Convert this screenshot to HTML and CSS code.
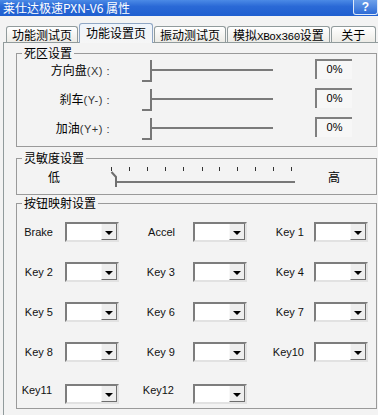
FILE: index.html
```html
<!DOCTYPE html>
<html lang="zh-CN">
<head>
    <meta charset="UTF-8">
    <title>莱仕达极速PXN-V6 属性</title>
    <link rel="stylesheet" href="styles.css">
</head>
<body>

    <div class="titlebar">
        <span class="title">莱仕达极速PXN-V6 属性</span>
        <span class="help">?</span>
    </div>

    <div class="tabs">
        <div class="tab">功能测试页</div>
        <div class="tab active">功能设置页</div>
        <div class="tab">振动测试页</div>
        <div class="tab">模拟<span class="mono">XBox360</span>设置</div>
        <div class="tab">关于</div>
    </div>

    <div class="panel">
        <!-- 死区设置 -->
        <fieldset class="group dead">
            <legend>死区设置</legend>
            <div class="dz-row">
                <div class="dz-label">方向盘<span class="axis">(X) :</span></div>
                <div class="slider"><span class="thumb"></span><span class="track"></span></div>
                <div class="value">0%</div>
            </div>
            <div class="dz-row">
                <div class="dz-label">刹车<span class="axis">(Y-) :</span></div>
                <div class="slider"><span class="thumb"></span><span class="track"></span></div>
                <div class="value">0%</div>
            </div>
            <div class="dz-row">
                <div class="dz-label">加油<span class="axis">(Y+) :</span></div>
                <div class="slider"><span class="thumb"></span><span class="track"></span></div>
                <div class="value">0%</div>
            </div>
        </fieldset>

        <!-- 灵敏度设置 -->
        <fieldset class="group sens">
            <legend>灵敏度设置</legend>
            <div class="sens-row">
                <span class="low">低</span>
                <svg class="ticks" width="190" height="24" viewBox="0 0 190 24">
                    <g stroke="#333" stroke-width="1">
                        <line x1="3.5" y1="2" x2="3.5" y2="6"/>
                        <line x1="21.5" y1="2" x2="21.5" y2="6"/>
                        <line x1="39.5" y1="2" x2="39.5" y2="6"/>
                        <line x1="57.5" y1="2" x2="57.5" y2="6"/>
                        <line x1="75.5" y1="2" x2="75.5" y2="6"/>
                        <line x1="94.5" y1="2" x2="94.5" y2="6"/>
                        <line x1="111.5" y1="2" x2="111.5" y2="6"/>
                        <line x1="129.5" y1="2" x2="129.5" y2="6"/>
                        <line x1="147.5" y1="2" x2="147.5" y2="6"/>
                        <line x1="165.5" y1="2" x2="165.5" y2="6"/>
                        <line x1="183.5" y1="2" x2="183.5" y2="6"/>
                    </g>
                    <line x1="8" y1="17" x2="187" y2="17" stroke="#777" stroke-width="2"/>
                    <path d="M3.5 7 L8 12 L8 22" fill="none" stroke="#6f6f6f" stroke-width="2"/>
                </svg>
                <span class="high">高</span>
            </div>
        </fieldset>

        <!-- 按钮映射设置 -->
        <fieldset class="group keys">
            <legend>按钮映射设置</legend>
            <div class="key-grid">
                <div class="key c1">Brake</div><div class="combo"><span class="drop"></span></div>
                <div class="key c2">Accel</div><div class="combo"><span class="drop"></span></div>
                <div class="key c3">Key 1</div><div class="combo"><span class="drop"></span></div>

                <div class="key c1">Key 2</div><div class="combo"><span class="drop"></span></div>
                <div class="key c2">Key 3</div><div class="combo"><span class="drop"></span></div>
                <div class="key c3">Key 4</div><div class="combo"><span class="drop"></span></div>

                <div class="key c1">Key 5</div><div class="combo"><span class="drop"></span></div>
                <div class="key c2">Key 6</div><div class="combo"><span class="drop"></span></div>
                <div class="key c3">Key 7</div><div class="combo"><span class="drop"></span></div>

                <div class="key c1">Key 8</div><div class="combo"><span class="drop"></span></div>
                <div class="key c2">Key 9</div><div class="combo"><span class="drop"></span></div>
                <div class="key c3">Key10</div><div class="combo"><span class="drop"></span></div>

                <div class="key c1 last">Key11</div><div class="combo last"><span class="drop"></span></div>
                <div class="key c2 last">Key12</div><div class="combo last"><span class="drop"></span></div>
            </div>
        </fieldset>
    </div>

</body>
</html>
```

FILE: styles.css
```css
body {
    margin: 0;
    width: 378px;
    height: 415px;
    overflow: hidden;
    background-color: #f3f3f3;
    font-family: "Noto Sans CJK SC", "Liberation Sans", sans-serif;
    font-size: 12px;
    color: #000;
}
.titlebar {
    height: 16px;
    display: flex;
    align-items: center;
    justify-content: space-between;
    background: linear-gradient(to bottom, #4b8ae6 0%, #2a69d6 40%, #1f5fd0 100%);
}
.title {
    margin-left: 3px;
    color: #fff;
    font-size: 12px;
    line-height: 14px;
}
.help {
    width: 23px;
    height: 14px;
    margin-top: -2px;
    border: 1px solid #dfe9f8;
    border-top: none;
    border-radius: 0 0 3px 3px;
    background: linear-gradient(to bottom, #6da0ea, #2e6bd6);
    color: #fff;
    font-family: "Liberation Sans", sans-serif;
    font-weight: bold;
    font-size: 12px;
    line-height: 14px;
    text-align: center;
}
.tabs {
    height: 26px;
    display: flex;
    align-items: flex-end;
    gap: 1px;
    padding-left: 6px;
}
.tab {
    box-sizing: border-box;
    height: 16px;
    min-width: 45px;
    padding: 0 5px;
    border: 1px solid #919b9c;
    border-bottom: none;
    border-radius: 3px 3px 0 0;
    background: linear-gradient(to bottom, #ffffff, #ecebe6);
    text-align: center;
    line-height: 15px;
    white-space: nowrap;
}
.tab.active {
    height: 20px;
    padding: 0 6px;
    margin-bottom: -1px;
    background: linear-gradient(to bottom, #eef4fb, #f6f6f6);
    border-color: #8fa6c4;
    line-height: 17px;
    position: relative;
}
.mono {
    font-family: "Liberation Mono", monospace;
    font-size: 11px;
    letter-spacing: -0.5px;
}
.panel {
    margin-left: 3px;
    border-left: 1px solid #919b9c;
    border-top: 1px solid #919b9c;
    padding: 0 1px 0 12px;
    height: 380px;
}
.group {
    margin: 0;
    padding: 0;
    border: 1px solid #9a9a9a;
    min-width: 0;
}
.group legend {
    margin-left: 5px;
    padding: 0 2px;
    line-height: 14px;
    font-size: 12px;
}
.dead {
    margin-top: 3px;
    padding-bottom: 6px;
}
.dz-row {
    display: flex;
    align-items: center;
    height: 22px;
    margin-bottom: 7px;
}
.dz-row:last-child {
    margin-bottom: 0;
}
.dz-label {
    width: 93px;
    text-align: right;
    line-height: 16px;
    margin-top: -2px;
    white-space: nowrap;
}
.axis {
    font-family: "Liberation Sans", sans-serif;
    font-size: 11px;
    color: #333;
    letter-spacing: 0.5px;
}
.slider {
    display: flex;
    align-items: flex-start;
    width: 131px;
    height: 22px;
    margin-left: 32px;
}
.thumb {
    box-sizing: border-box;
    width: 10px;
    height: 22px;
    border-right: 2px solid #777;
    border-bottom: 2px solid #777;
}
.track {
    flex: 1;
    height: 2px;
    margin-top: 9px;
    background-color: #7a7a7a;
}
.value {
    box-sizing: border-box;
    width: 37px;
    height: 20px;
    margin-left: 42px;
    margin-top: -4px;
    border-top: 2px solid #7f7f7f;
    border-left: 2px solid #7f7f7f;
    background-color: #f7f7f7;
    font-family: "Liberation Sans", sans-serif;
    font-size: 11px;
    line-height: 16px;
    text-align: center;
}
.sens {
    margin-top: 4px;
    padding-bottom: 5px;
}
.sens-row {
    display: flex;
    align-items: center;
    height: 24px;
}
.low {
    margin-left: 31px;
    margin-top: -2px;
}
.ticks {
    margin-left: 48px;
    display: block;
}
.high {
    margin-left: 30px;
    margin-top: -2px;
}
.keys {
    margin-top: 1px;
    padding: 12px 0 6px;
}
.key-grid {
    display: grid;
    grid-template-columns: 48px 54px 74px 54px 67px 54px;
    grid-auto-rows: 20px;
    row-gap: 20px;
}
.key {
    font-family: "Liberation Sans", sans-serif;
    font-size: 11px;
    line-height: 20px;
    text-align: right;
    color: #111;
}
.key.c1 { padding-right: 12px; }
.key.c2 { padding-right: 18px; }
.key.c3 { padding-right: 10px; }
.key.last {
    margin-top: -2px;
    padding-right: 13px;
}
.key.c2.last { padding-right: 19px; }
.combo {
    box-sizing: border-box;
    height: 20px;
    display: flex;
    justify-content: flex-end;
    border: 2px solid;
    border-color: #7d7d7d #e2e2e2 #e2e2e2 #7d7d7d;
    background-color: #fff;
}
.combo.last {
    margin-top: 2px;
}
.drop {
    box-sizing: border-box;
    width: 16px;
    height: 16px;
    display: flex;
    align-items: center;
    justify-content: center;
    background-color: #eeeeee;
    border-right: 1px solid #6e6e6e;
    border-bottom: 1px solid #6e6e6e;
    border-left: 1px solid #f8f8f8;
}
.drop::after {
    content: "";
    border-top: 4px solid #000;
    border-left: 4px solid transparent;
    border-right: 4px solid transparent;
    margin-top: 2px;
}
```
